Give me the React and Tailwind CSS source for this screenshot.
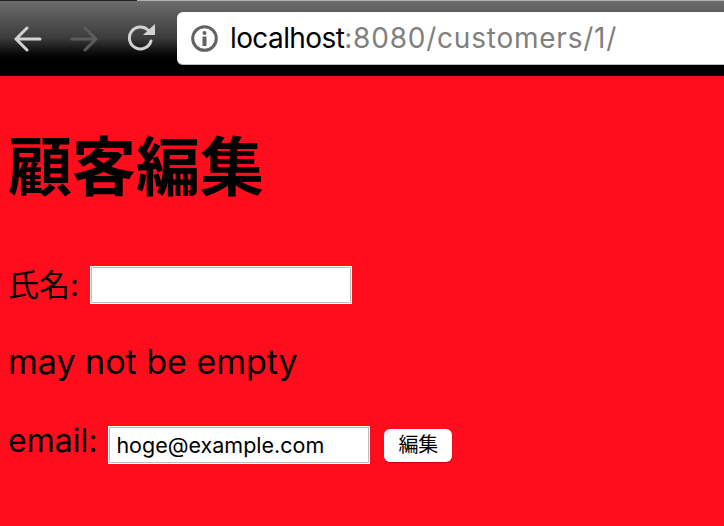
import React from 'react';

const App = () => {
  return (
    <div className="w-[724px] h-[526px] overflow-hidden flex flex-col bg-[#ff0d1c]">
      {/* browser toolbar */}
      <div className="h-[76px] shrink-0 bg-gradient-to-b from-[#6e6e6e] via-[#3c3c3c] via-50% to-black to-85% flex flex-col">
        <div className="h-[1px] flex">
          <div className="w-[137px] bg-[#222222]" />
          <div className="flex-1 bg-[#b0b0b0]" />
        </div>
        <div className="flex items-start">
          <div className="w-[177px] pt-[24px] pl-[14px] flex items-center gap-[28px]">
            <svg width="28" height="26" viewBox="0 0 28 26" fill="none" stroke="#d2d2d2" strokeWidth="3" strokeLinecap="round" strokeLinejoin="round">
              <path d="M2 13 H26 M13 2 L2 13 L13 24" />
            </svg>
            <svg width="28" height="26" viewBox="0 0 28 26" fill="none" stroke="#5c5c5c" strokeWidth="3" strokeLinecap="round" strokeLinejoin="round">
              <path d="M2 13 H26 M15 2 L26 13 L15 24" />
            </svg>
            <svg width="28" height="28" viewBox="0 0 28 28" fill="none" className="-mt-[1px] ml-[2px]">
              <path d="M23 17 A11 11 0 1 1 20 6" stroke="#d2d2d2" strokeWidth="3" strokeLinecap="round" />
              <path d="M15 11 L27 11 L27 0 Z" fill="#d2d2d2" />
            </svg>
          </div>
          <div className="mt-[11px] h-[53px] flex-1 bg-white rounded-l-[6px] border-b border-[#bdbdbd] flex items-center pl-[14px]">
            <svg width="27" height="27" viewBox="0 0 27 27" fill="none" className="shrink-0">
              <circle cx="13.5" cy="13.5" r="11.8" stroke="#636363" strokeWidth="3" />
              <circle cx="13.5" cy="8" r="2" fill="#636363" />
              <rect x="11.5" y="11.5" width="4" height="9.5" fill="#636363" />
            </svg>
            <div className="ml-[12px] text-[28px] leading-none font-['Inter',sans-serif] text-[#808080] whitespace-nowrap">
              <span className="text-black tracking-[-0.6px]">localhost</span>
              <span className="tracking-[0.78px]">:8080/customers/1/</span>
            </div>
          </div>
        </div>
      </div>

      {/* page */}
      <div className="pl-[8px] text-black font-['Inter','Noto_Sans_CJK_JP',sans-serif]">
        <h1 className="mt-[46px] text-[64px] leading-[80px] font-bold font-['Noto_Sans_CJK_JP',sans-serif]">顧客編集</h1>
        <div className="mt-[63px] h-[40px] flex items-center text-[31px] font-normal">
          <span>氏名:</span>
          <input className="ml-[12px] w-[260px] h-[36px] bg-white border border-[#bdbdbd] shadow-[0_0_0_1px_white]" />
        </div>
        <p className="mt-[35px] h-[44px] leading-[44px] text-[34px] font-normal whitespace-nowrap">may not be empty</p>
        <div className="mt-[41px] h-[40px] flex items-center text-[32px] font-normal">
          <span className="-mt-[8px]">email:</span>
          <input
            defaultValue="hoge@example.com"
            className="ml-[12px] w-[260px] h-[36px] px-[6px] bg-white border border-[#bdbdbd] shadow-[0_0_0_1px_white] text-[21.5px] font-normal text-black"
          />
          <button className="ml-[15px] w-[68px] h-[33px] bg-white rounded-[6px] text-[20px] font-normal leading-none shadow-[0_1px_1px_rgba(120,0,0,0.5)]">編集</button>
        </div>
      </div>
    </div>
  );
};

export default App;
